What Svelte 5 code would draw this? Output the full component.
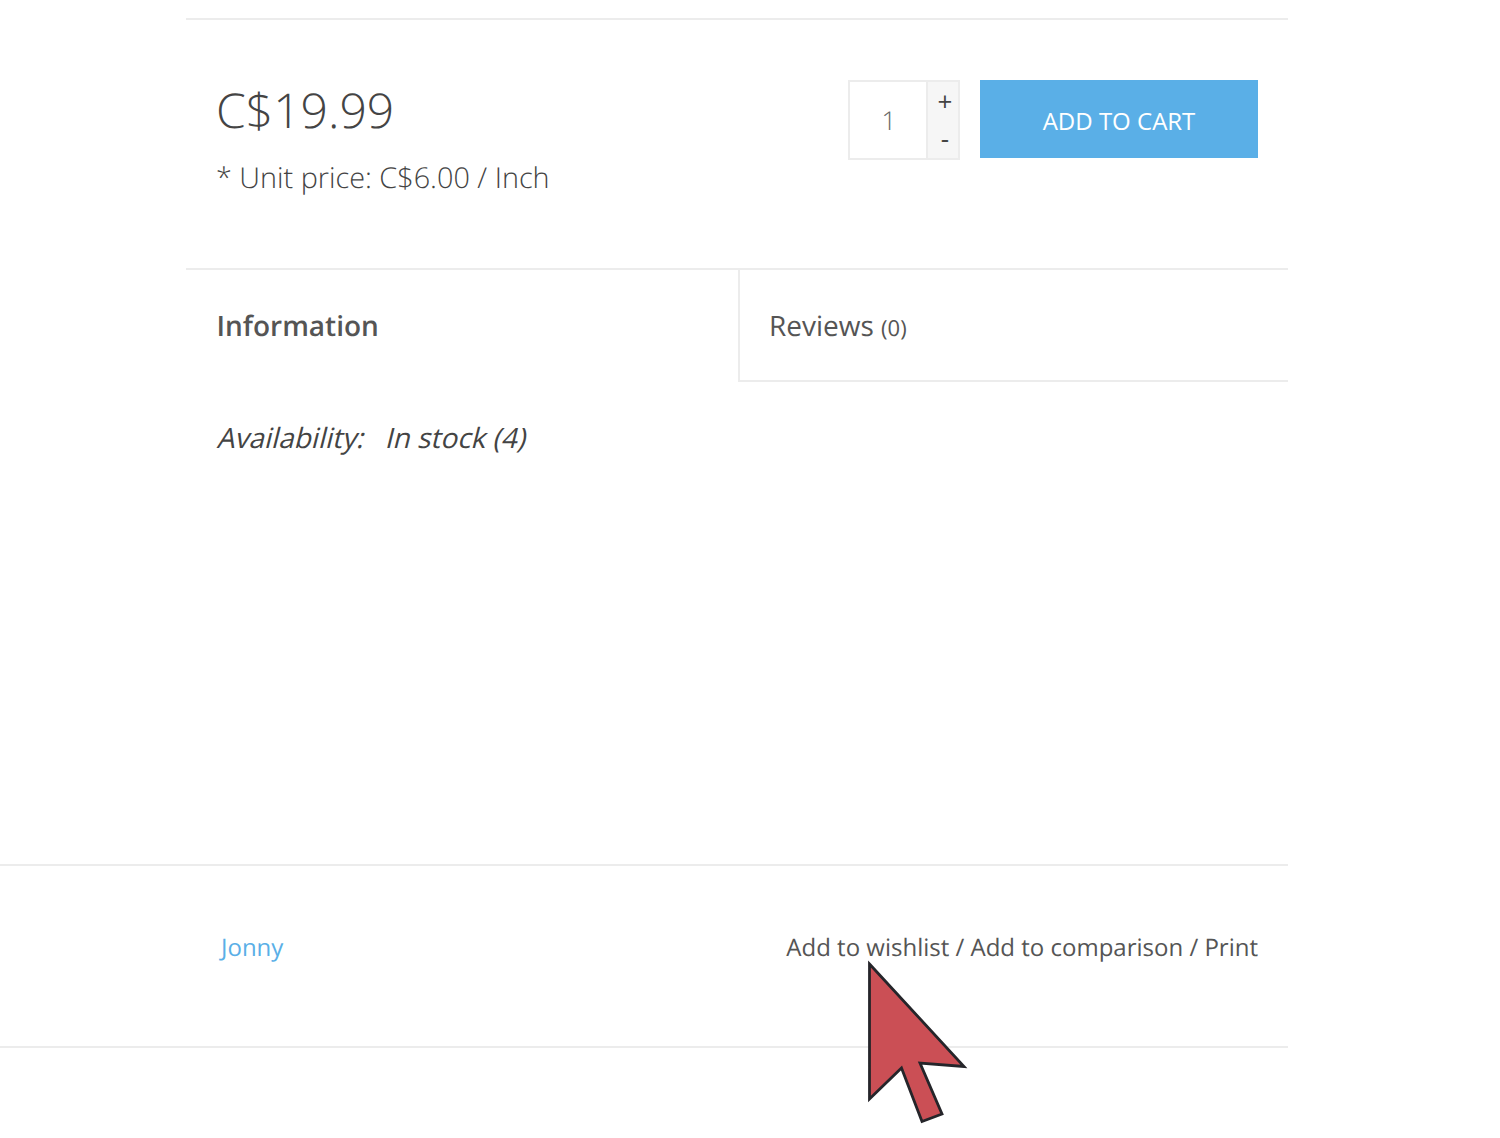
<script>
    const tabs = [
        { id: "info", label: "Information", active: true },
        { id: "reviews", label: "Reviews", count: 0, active: false },
    ];
    const footerLinks = ["Add to wishlist", "Add to comparison", "Print"];
</script>

<div class="page">
    <div class="product">
        <section class="buy">
            <div class="prices">
                <div class="price">C$19.99</div>
                <div class="unit">* Unit price: C$6.00 / Inch</div>
            </div>
            <div class="actions">
                <div class="qty">
                    <div class="qty-value">1</div>
                    <div class="qty-btns">
                        <span class="plus">+</span>
                        <span class="minus">-</span>
                    </div>
                </div>
                <button class="cart">ADD TO CART</button>
            </div>
        </section>

        <div class="tabs">
            {#each tabs as tab}
                <div class="tab" class:active={tab.active}>
                    {tab.label}
                    {#if tab.count !== undefined}<small>({tab.count})</small>{/if}
                </div>
            {/each}
        </div>

        <div class="panel">
            <span class="slant">Availability:</span>
            <span class="slant">In stock (4)</span>
        </div>
    </div>

    <footer class="meta">
        <a class="author" href="#top">Jonny</a>
        <div class="links">{footerLinks.join(" / ")}</div>
    </footer>
</div>

<!-- mouse pointer overlay -->
<svg class="pointer" width="110" height="170" viewBox="860 955 110 170">
    <path
        d="M869.5 964 L964 1066.5 L920 1063 L942 1114 L922 1121.5 L901.5 1068 L869.5 1099 Z"
        fill="#cb4f55"
        stroke="#25252a"
        stroke-width="2.8"
    />
</svg>

<style>
    :global(body) {
        margin: 0;
        background: #fff;
    }

    .page {
        width: 1288px;
        padding-top: 18px;
        font-family: "Open Sans", sans-serif;
        text-rendering: geometricPrecision;
        color: #555;
    }

    .product {
        margin-left: 186px;
    }

    .buy {
        display: flex;
        justify-content: space-between;
        box-sizing: border-box;
        height: 250px;
        padding: 60px 30px 0 30px;
        border-top: 2px solid #ececec;
    }

    .price {
        font-size: 48px;
        font-weight: 300;
        line-height: 62px;
        color: #444;
    }

    .unit {
        margin-top: 16px;
        font-size: 28.8px;
        font-weight: 300;
        line-height: 40px;
        color: #444;
    }

    .actions {
        display: flex;
        gap: 20px;
        height: 78px;
    }

    .qty {
        display: flex;
        box-sizing: border-box;
        width: 112px;
        height: 80px;
        border: 2px solid #ececec;
    }

    .qty-value {
        box-sizing: border-box;
        width: 76px;
        padding-left: 2px;
        font-size: 26px;
        font-weight: 300;
        line-height: 76px;
        text-align: center;
        color: #666;
    }

    .qty-btns {
        display: flex;
        flex: 1;
        flex-direction: column;
        align-items: center;
        box-sizing: border-box;
        padding-left: 4px;
        background: #f6f6f6;
        border-left: 2px solid #ececec;
        color: #444;
        font-size: 26px;
    }

    .plus {
        height: 38px;
        line-height: 38px;
    }

    .minus {
        line-height: 36px;
    }

    .cart {
        width: 278px;
        height: 78px;
        padding: 2px 0 0;
        border: 0;
        background: #5aafe7;
        color: #fff;
        font-family: inherit;
        font-size: 24px;
        font-weight: 400;
    }

    .tabs {
        display: grid;
        grid-template-columns: 552px 1fr;
        height: 114px;
        border-top: 2px solid #ececec;
        box-sizing: border-box;
    }

    .tab {
        box-sizing: border-box;
        height: 112px;
        padding: 0 29px;
        font-size: 28px;
        line-height: 112px;
        border-left: 2px solid #ececec;
        border-bottom: 2px solid #ececec;
    }

    .tab small {
        font-size: 22px;
    }

    .tab.active {
        padding-left: 30.5px;
        font-weight: 600;
        border: 0;
    }

    .panel {
        display: flex;
        align-items: flex-start;
        gap: 21px;
        height: 482px;
        box-sizing: border-box;
        padding: 34px 31px 0 33px;
        font-size: 28px;
        line-height: 44px;
        color: #444;
    }

    .slant {
        transform: skewX(-14deg);
    }

    .meta {
        display: flex;
        justify-content: space-between;
        align-items: center;
        box-sizing: border-box;
        height: 184px;
        padding: 0 30px 18px 221px;
        border-top: 2px solid #ececec;
        border-bottom: 2px solid #ececec;
        font-size: 24px;
    }

    .author {
        color: #5aafe7;
        text-decoration: none;
    }

    .pointer {
        position: absolute;
        left: 860px;
        top: 955px;
    }
</style>
